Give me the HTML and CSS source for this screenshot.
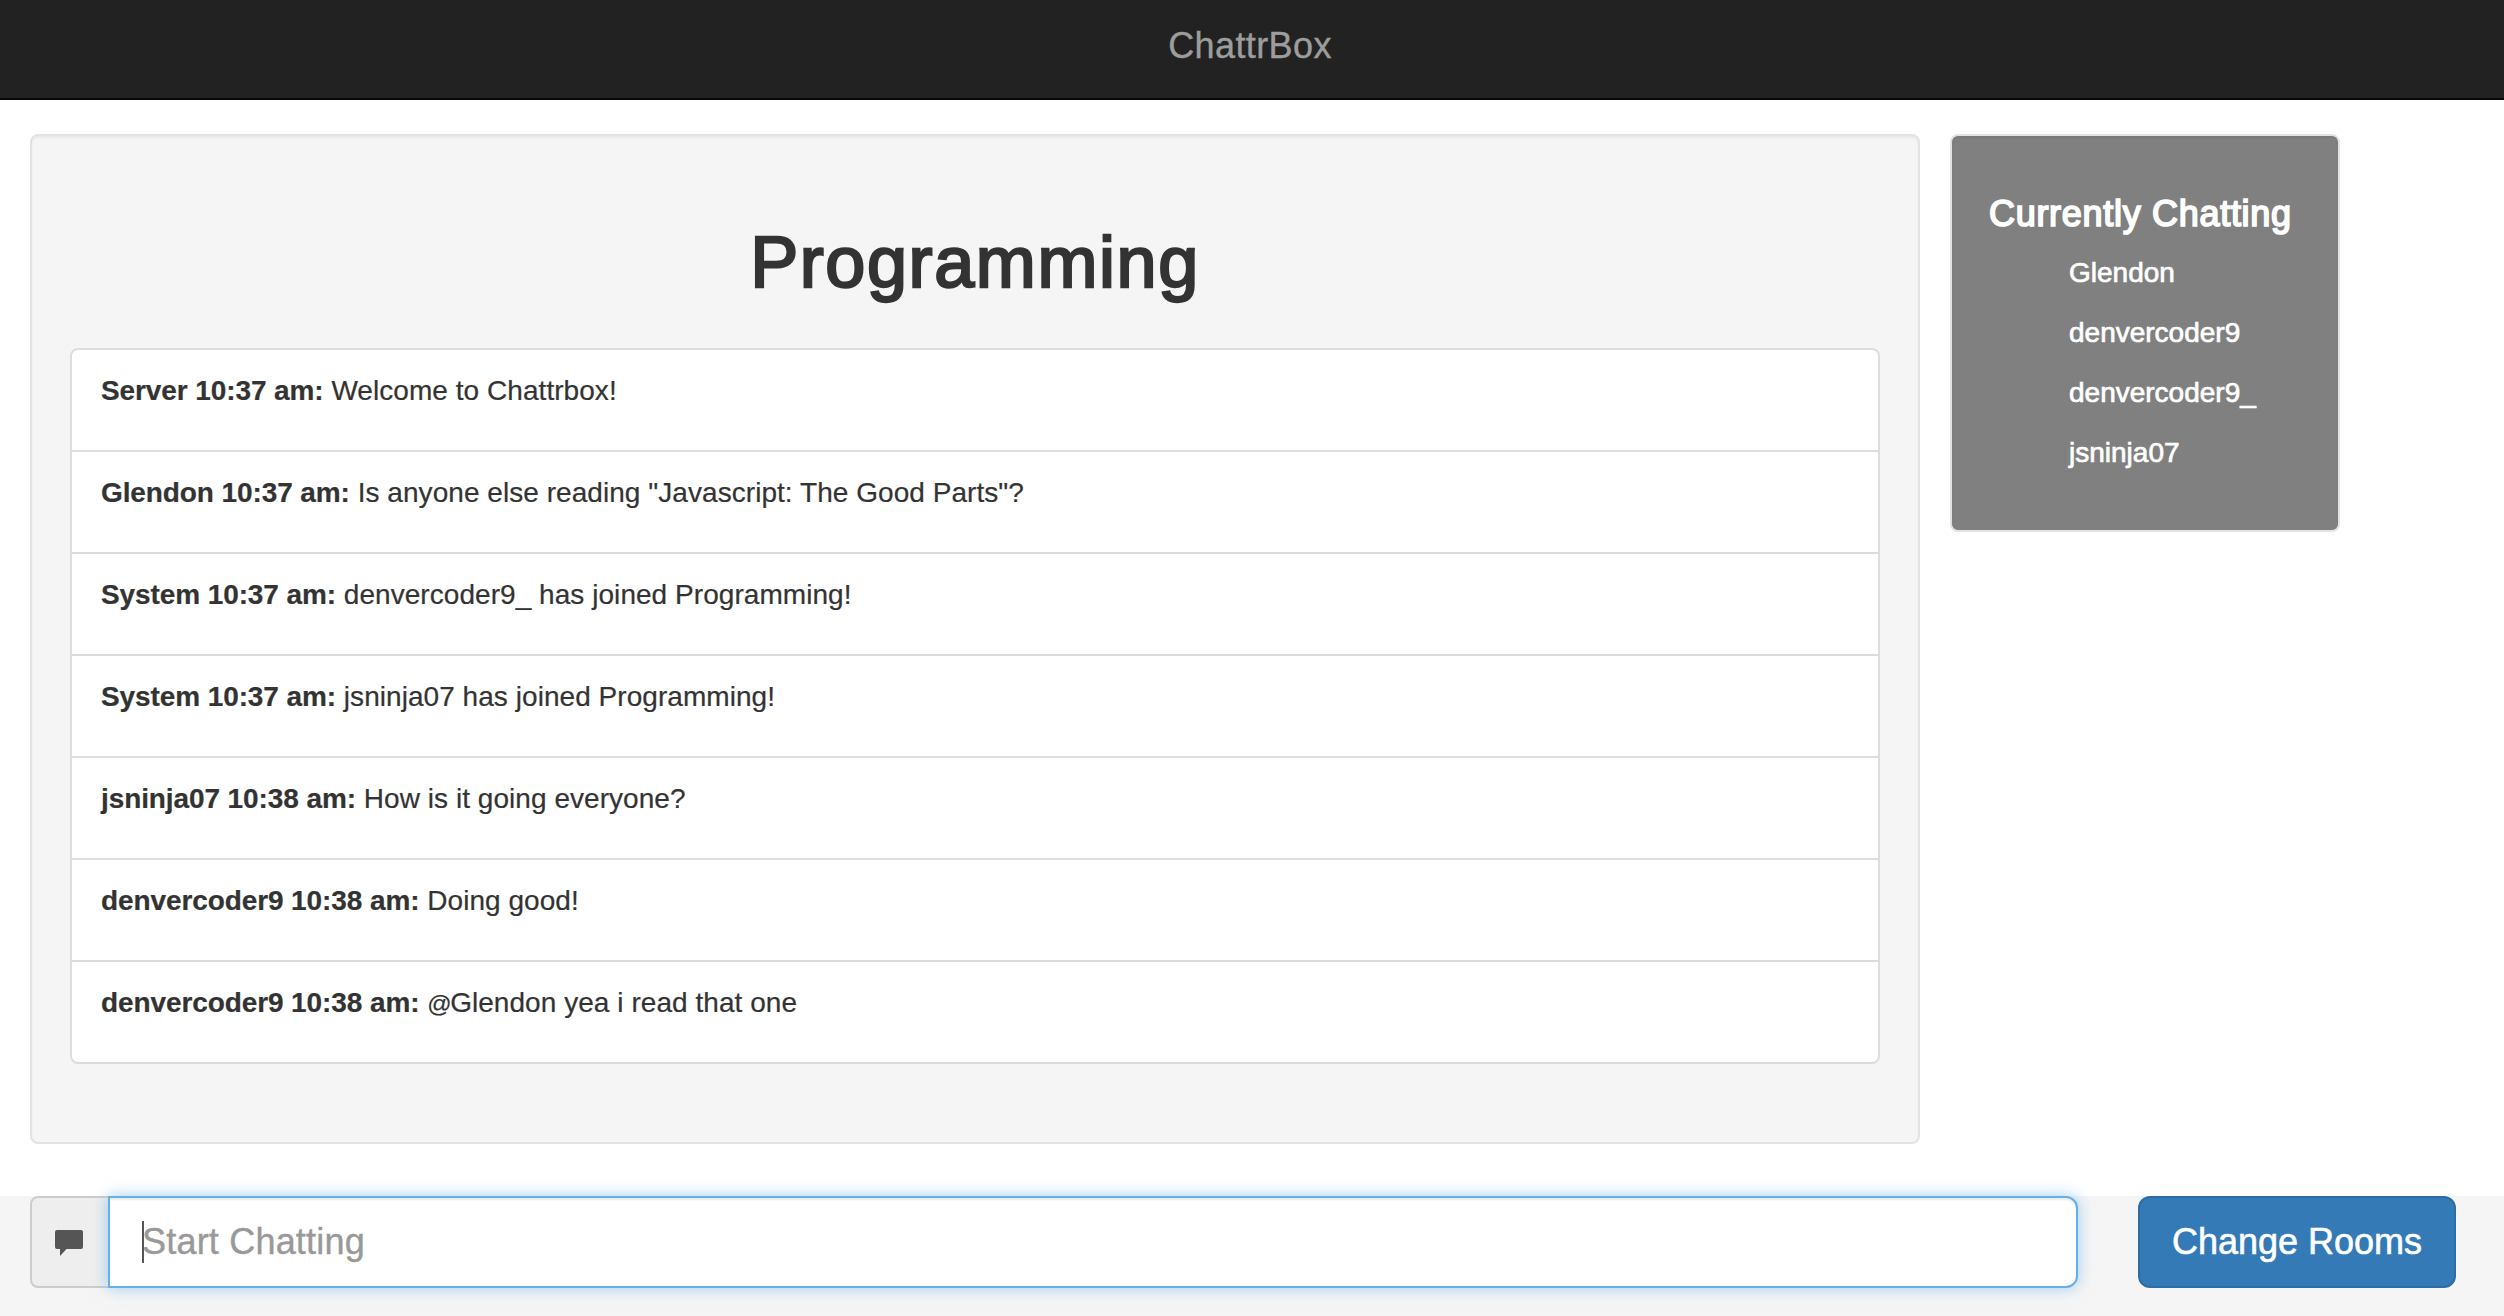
FILE: index.html
```html
<!DOCTYPE html>
<html lang="en">
<head>
<meta charset="utf-8">
<title>ChattrBox</title>
<link rel="stylesheet" href="styles.css">
</head>
<body>
<nav class="navbar"><span class="brand">ChattrBox</span></nav>
<main class="content">
  <section class="well room">
    <h1 class="room-title">Programming</h1>
    <ul class="messages">
      <li class="message"><strong>Server 10:37 am:</strong> Welcome to Chattrbox!</li>
      <li class="message"><strong>Glendon 10:37 am:</strong> Is anyone else reading "Javascript: The Good Parts"?</li>
      <li class="message"><strong>System 10:37 am:</strong> denvercoder9_ has joined Programming!</li>
      <li class="message"><strong>System 10:37 am:</strong> jsninja07 has joined Programming!</li>
      <li class="message"><strong>jsninja07 10:38 am:</strong> How is it going everyone?</li>
      <li class="message"><strong>denvercoder9 10:38 am:</strong> Doing good!</li>
      <li class="message"><strong>denvercoder9 10:38 am:</strong> <span class="at">@</span>Glendon yea i read that one</li>
    </ul>
  </section>
  <aside class="well people">
    <h4 class="people-title">Currently Chatting</h4>
    <ul class="people-list">
      <li>Glendon</li>
      <li>denvercoder9</li>
      <li>denvercoder9_</li>
      <li>jsninja07</li>
    </ul>
  </aside>
</main>
<footer class="composer">
  <span class="addon">
    <svg class="bubble" width="28" height="26" viewBox="0 0 28 26" aria-hidden="true"><path fill="#555" d="M2 0H26Q28 0 28 2V17Q28 19 26 19H11.500L5 26V19H2Q0 19 0 17V2Q0 0 2 0Z"/></svg>
  </span>
  <div class="field">
    <input class="chat-input" type="text" placeholder="Start Chatting">
    <span class="caret"></span>
  </div>
  <button class="rooms-button" type="button">Change Rooms</button>
</footer>
</body>
</html>
```
FILE: styles.css
```css
* {
  box-sizing: border-box;
}

body {
  margin: 0;
  height: 1316px;
  overflow: hidden;
  display: flex;
  flex-direction: column;
  background: #fff;
  color: #333;
  font: 28px/40px "Liberation Sans", Arial, sans-serif;
}

ul {
  list-style: none;
  margin: 0;
  padding: 0;
}

.navbar {
  height: 100px;
  background: #222;
  border-bottom: 2px solid #080808;
  text-align: center;
  padding: 26px 4px 0 0;
}

.brand {
  color: #9d9d9d;
  font-size: 36px;
  letter-spacing: 0.4px;
  -webkit-text-stroke: 0.4px #9d9d9d;
}

.content {
  display: flex;
  align-items: flex-start;
  gap: 30px;
  height: 1096px;
  padding: 34px 30px 0;
}

.well {
  border: 2px solid #e3e3e3;
  border-radius: 8px;
  background: #f5f5f5;
  box-shadow: inset 0 2px 2px rgba(0, 0, 0, 0.05);
}

.room {
  width: 1890px;
  height: 1010px;
  padding: 86px 38px 0;
}

.room-title {
  margin: 0 0 46px;
  font-size: 72px;
  line-height: 80px;
  font-weight: 400;
  text-align: center;
  letter-spacing: 1.6px;
  -webkit-text-stroke: 2.4px #333;
}

.messages {
  background: #fff;
  border: 2px solid #ddd;
  border-radius: 8px;
}

.message {
  height: 100px;
  padding: 21px 29px 0;
  letter-spacing: 0.05px;
  -webkit-text-stroke: 0.2px #333;
}

.message + .message {
  height: 102px;
  border-top: 2px solid #ddd;
}

.message strong {
  letter-spacing: -0.1px;
}

.at {
  font-size: 24px;
  line-height: 1;
  letter-spacing: -1.5px;
}

.people {
  width: 390px;
  height: 398px;
  padding: 58px 35px 0 37px;
  background: #808080;
  color: #fff;
}

.people-title {
  margin: 0 0 19px;
  font-size: 36px;
  line-height: 40px;
  font-weight: 400;
  letter-spacing: 0.7px;
  white-space: nowrap;
  -webkit-text-stroke: 1.7px #fff;
}

.people-list {
  display: grid;
  gap: 20px;
  padding-left: 80px;
  -webkit-text-stroke: 0.7px #fff;
}

.composer {
  flex: 1;
  display: flex;
  align-items: flex-start;
  padding: 0 48px 0 30px;
  background: #f5f5f5;
}

.addon {
  width: 80px;
  height: 92px;
  margin-right: -2px;
  padding: 2px 2px 0 0;
  display: flex;
  align-items: center;
  justify-content: center;
  border: 2px solid #ccc;
  border-radius: 8px 0 0 8px;
  background: #eee;
}

.bubble {
  display: block;
}

.field {
  position: relative;
  width: 1970px;
  height: 92px;
  margin-right: 60px;
}

.chat-input {
  display: block;
  width: 100%;
  height: 92px;
  padding: 0 32px;
  border: 2px solid #66afe9;
  border-radius: 0 12px 12px 0;
  outline: 0;
  background: #fff;
  color: #555;
  font: 36px "Liberation Sans", Arial, sans-serif;
  letter-spacing: 0.2px;
  box-shadow: inset 0 2px 2px rgba(0, 0, 0, 0.075), 0 0 16px rgba(102, 175, 233, 0.6);
}

.chat-input::placeholder {
  color: #999;
  -webkit-text-stroke: 0.4px #999;
}

.caret {
  position: absolute;
  left: 34px;
  top: 25px;
  width: 2px;
  height: 42px;
  background: #555;
}

.rooms-button {
  width: 318px;
  height: 92px;
  padding: 0;
  border: 2px solid #2e6da4;
  border-radius: 12px;
  background: #337ab7;
  color: #fff;
  font: 36px "Liberation Sans", Arial, sans-serif;
  -webkit-text-stroke: 0.6px #fff;
}
```
